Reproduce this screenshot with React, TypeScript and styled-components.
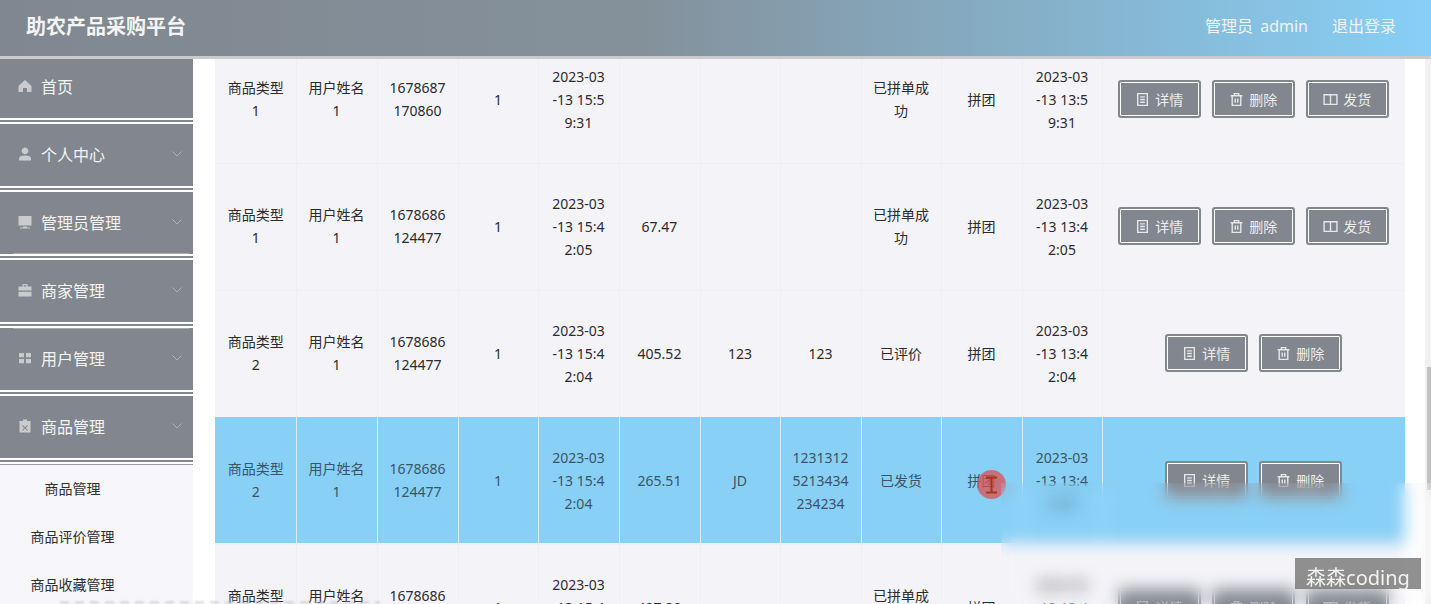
import React from "react";
import styled, { createGlobalStyle } from "styled-components";

const GlobalStyle = createGlobalStyle`
  html, body {
    margin: 0;
    height: 100%;
    overflow: hidden;
    background: #fff;
    font-family: "Noto Sans", "Noto Sans CJK SC", sans-serif;
  }
`;

const Page = styled.div`
  position: relative;
  width: 1431px;
  height: 604px;
  overflow: hidden;
`;

const Header = styled.header`
  position: relative;
  z-index: 2;
  box-sizing: border-box;
  height: 59px;
  border-bottom: 3px solid #c9c9ce;
  display: flex;
  align-items: center;
  justify-content: space-between;
  padding: 0 35px 6px 26px;
  background: linear-gradient(90deg, #808790 0%, #84919b 45%, #87cff6 100%);
  color: #fff;
`;

const Title = styled.h1`
  margin: 0;
  font-size: 20px;
  font-weight: 700;
  color: #f4f4f4;
`;

const HeaderLinks = styled.div`
  display: flex;
  gap: 24px;
  font-size: 16px;
  word-spacing: 3px;
  color: #eef4f8;
`;

const Body = styled.div`
  display: flex;
  height: 545px;
`;

const Sidebar = styled.aside`
  width: 193px;
  flex: none;
  margin-top: -3px;
  background: #f7f6fa;
`;

const MenuItem = styled.div<{ $rule?: "top" | "bottom" }>`
  position: relative;
  box-sizing: border-box;
  height: 62px;
  display: flex;
  align-items: center;
  padding: 0 11px 2px 18px;
  background: #82868e;
  color: #f4f4f4;
  font-size: 16px;
  box-shadow: 0 2px 0 #fff, 0 4px 0 #82868e, 0 6px 0 #fff;
  margin-bottom: 6px;

  &::after {
    content: "";
    display: ${({ $rule }) => ($rule ? "block" : "none")};
    position: absolute;
    left: 13px;
    right: 4px;
    height: 1px;
    background: #a9acb1;
    ${({ $rule }) => ($rule === "top" ? "top: 0;" : "bottom: 0;")}
  }
`;

const MenuIcon = styled.svg`
  width: 14px;
  height: 14px;
  margin-right: 9px;
  flex: none;
  fill: #c9cbce;
`;

const Chevron = styled.svg`
  width: 10px;
  height: 6px;
  margin-left: auto;
  fill: none;
  stroke: #b0b4b8;
  stroke-width: 1;
`;

const SubMenu = styled.div`
  border-top: 1px solid #9a9da3;
`;

const SubItem = styled.div`
  width: 145px;
  height: 48px;
  line-height: 48px;
  text-align: center;
  font-size: 14px;
  color: #2e2e30;
`;

const Main = styled.main`
  flex: 1;
  padding: 0 26px 0 22px;
  overflow: hidden;
`;

const Table = styled.table`
  width: 1190px;
  margin-top: -23px;
  table-layout: fixed;
  border-collapse: collapse;
  font-size: 14px;
  line-height: 23px;
`;

const Row = styled.tr<{ $active?: boolean }>`
  height: 127px;
  background: ${({ $active }) => ($active ? "#88d0f6" : "#f4f4f8")};
  color: ${({ $active }) => ($active ? "#3b5468" : "#2b2b2d")};

  td {
    border-left: 1px solid ${({ $active }) => ($active ? "#d6eefb" : "#efeff2")};
    border-top: 1px solid ${({ $active }) => ($active ? "#88d0f6" : "#efeff2")};
    box-shadow: ${({ $active }) => ($active ? "inset 0 -1px 0 #f4f4f8" : "none")};
  }

  td:first-child {
    border-left: 0;
    padding-left: 11px;
  }

  td:last-child {
    padding-left: 9px;
  }
`;

const Cell = styled.td`
  padding: 0 10px 2px;
  text-align: center;
  word-break: break-all;
  vertical-align: middle;
  white-space: pre-line;
`;

const ActionRow = styled.div`
  display: flex;
  justify-content: center;
  gap: 11px;
`;

const ActionButton = styled.button`
  width: 83px;
  height: 38px;
  box-sizing: border-box;
  display: flex;
  align-items: center;
  justify-content: center;
  gap: 5px;
  padding: 0;
  background: #82868e;
  border: 2px solid #82868e;
  border-radius: 3px;
  box-shadow: inset 0 0 0 1px #fff;
  color: #eceded;
  font-family: inherit;
  font-size: 14px;
`;

const ButtonIcon = styled.svg`
  width: 15px;
  height: 15px;
  fill: none;
  stroke: #e6e7e8;
  stroke-width: 1.3;
`;

const BlurPatch = styled.div`
  position: absolute;
  left: 1001px;
  top: 483px;
  width: 430px;
  height: 121px;
  backdrop-filter: blur(8px);
`;

const SubtitleBlur = styled.div`
  position: absolute;
  left: 60px;
  top: 601px;
  width: 320px;
  height: 3px;
  background: repeating-linear-gradient(90deg, #b9b9be 0 9px, transparent 9px 15px);
  filter: blur(1px);
  opacity: 0.45;
`;

const Watermark = styled.div`
  position: absolute;
  left: 1295px;
  top: 558px;
  width: 126px;
  height: 31px;
  background: rgba(125, 125, 125, 0.85);
  color: #f2f2f2;
  font-size: 20px;
  line-height: 40px;
  text-align: center;
  overflow: hidden;
`;

const CursorDot = styled.div`
  position: absolute;
  left: 977px;
  top: 470px;
  width: 29px;
  height: 29px;
  border-radius: 50%;
  background: rgba(222, 80, 80, 0.75);
  display: flex;
  align-items: center;
  justify-content: center;
`;

const Scrollbar = styled.div`
  position: absolute;
  right: 0;
  top: 59px;
  bottom: 0;
  width: 6px;
  background: #f1f1f1;
`;

const ScrollThumb = styled.div`
  margin: 308px 0 0 2px;
  height: 123px;
  background: #c1c1c1;
`;

type Icon = "home" | "user" | "monitor" | "case" | "grid" | "clip";

const iconPaths: Record<Icon, string> = {
  home: "M7 1 L13.5 7 V13 H9 V9 H5 V13 H.5 V7 Z",
  user: "M7 0.5 a3.4 3.4 0 1 1 -.01 0 Z M1 13.5 V11.5 C1 9.5 3 8.4 7 8.4 S13 9.5 13 11.5 V13.5 Z",
  monitor: "M.5 1 H13.5 V10.5 H.5 Z M5 11.5 H9 V12.5 H12 V13.5 H2 V12.5 H5 Z",
  case: "M4.5 1 H9.5 V3.5 H13.5 V7.5 H.5 V3.5 H4.5 Z M5.7 2.2 V3.5 H8.3 V2.2 Z M.5 8.7 H13.5 V13.5 H.5 Z",
  grid: "M1 2 H6 V6.3 H1 Z M8 2 H13 V6.3 H8 Z M1 8 H6 V12.3 H1 Z M8 8 H13 V12.3 H8 Z",
  clip: "M5 .5 H9 V2 H12.5 V13.5 H1.5 V2 H5 Z M4.8 6 L7 8.2 L9.2 6 L9.9 6.7 L7.7 8.9 L9.9 11.1 L9.2 11.8 L7 9.6 L4.8 11.8 L4.1 11.1 L6.3 8.9 L4.1 6.7 Z",
};

const menu: { label: string; icon: Icon; arrow?: boolean; rule?: "top" | "bottom" }[] = [
  { label: "首页", icon: "home" },
  { label: "个人中心", icon: "user", arrow: true },
  { label: "管理员管理", icon: "monitor", arrow: true, rule: "bottom" },
  { label: "商家管理", icon: "case", arrow: true },
  { label: "用户管理", icon: "grid", arrow: true, rule: "top" },
  { label: "商品管理", icon: "clip", arrow: true },
];

const DetailIcon = () => (
  <ButtonIcon viewBox="0 0 14 14">
    <path d="M2.5 1.5 H11.5 V12.5 H2.5 Z M4.8 4.5 H9.2 M4.8 7 H9.2 M4.8 9.5 H9.2" />
  </ButtonIcon>
);

const DeleteIcon = () => (
  <ButtonIcon viewBox="0 0 14 14">
    <path d="M1.5 3.5 H12.5 M5 3.5 V1.5 H9 V3.5 M3 3.5 V12.5 H11 V3.5 M5.8 6 V10 M8.2 6 V10" />
  </ButtonIcon>
);

const ShipIcon = () => (
  <ButtonIcon viewBox="0 0 14 14">
    <path d="M1 2.5 H13 V11.5 H1 Z M7 2.5 V11.5" />
  </ButtonIcon>
);

interface RowData {
  type: string;
  serial: string;
  paid: string;
  price: string;
  company: string;
  tracking: string;
  status: string;
  created: string;
  ship?: boolean;
  active?: boolean;
}

const rows: RowData[] = [
  { type: "商品类型1", serial: "1678687170860", paid: "2023-03\n-13 15:5\n9:31", price: "", company: "", tracking: "", status: "已拼单成功", created: "2023-03\n-13 13:5\n9:31", ship: true },
  { type: "商品类型1", serial: "1678686124477", paid: "2023-03\n-13 15:4\n2:05", price: "67.47", company: "", tracking: "", status: "已拼单成功", created: "2023-03\n-13 13:4\n2:05", ship: true },
  { type: "商品类型2", serial: "1678686124477", paid: "2023-03\n-13 15:4\n2:04", price: "405.52", company: "123", tracking: "123", status: "已评价", created: "2023-03\n-13 13:4\n2:04" },
  { type: "商品类型2", serial: "1678686124477", paid: "2023-03\n-13 15:4\n2:04", price: "265.51", company: "JD", tracking: "12313125213434234234", status: "已发货", created: "2023-03\n-13 13:4\n2:04", active: true },
  { type: "商品类型1", serial: "1678686124477", paid: "2023-03\n-13 15:4\n2:03", price: "407.20", company: "", tracking: "", status: "已拼单成功", created: "2023-03\n-13 13:4\n2:03", ship: true },
];

const widths = [81, 81, 81, 80, 81, 81, 80, 81, 80, 81, 80, 303];

export default function App() {
  return (
    <Page>
      <GlobalStyle />
      <Header>
        <Title>助农产品采购平台</Title>
        <HeaderLinks>
          <span>管理员 admin</span>
          <span>退出登录</span>
        </HeaderLinks>
      </Header>
      <Body>
        <Sidebar>
          {menu.map((item) => (
            <MenuItem key={item.label} $rule={item.rule}>
              <MenuIcon viewBox="0 0 14 14">
                <path fillRule="evenodd" d={iconPaths[item.icon]} />
              </MenuIcon>
              {item.label}
              {item.arrow && (
                <Chevron viewBox="0 0 10 6">
                  <path d="M.5 .5 L5 5 L9.5 .5" />
                </Chevron>
              )}
            </MenuItem>
          ))}
          <SubMenu>
            <SubItem>商品管理</SubItem>
            <SubItem>商品评价管理</SubItem>
            <SubItem>商品收藏管理</SubItem>
          </SubMenu>
        </Sidebar>
        <Main>
          <Table>
            <colgroup>
              {widths.map((w, i) => (
                <col key={i} style={{ width: w }} />
              ))}
            </colgroup>
            <tbody>
              {rows.map((row, i) => (
                <Row key={i} $active={row.active}>
                  <Cell>{row.type}</Cell>
                  <Cell>用户姓名1</Cell>
                  <Cell>{row.serial}</Cell>
                  <Cell>1</Cell>
                  <Cell>{row.paid}</Cell>
                  <Cell>{row.price}</Cell>
                  <Cell>{row.company}</Cell>
                  <Cell>{row.tracking}</Cell>
                  <Cell>{row.status}</Cell>
                  <Cell>拼团</Cell>
                  <Cell>{row.created}</Cell>
                  <Cell>
                    <ActionRow>
                      <ActionButton><DetailIcon />详情</ActionButton>
                      <ActionButton><DeleteIcon />删除</ActionButton>
                      {row.ship && <ActionButton><ShipIcon />发货</ActionButton>}
                    </ActionRow>
                  </Cell>
                </Row>
              ))}
            </tbody>
          </Table>
        </Main>
      </Body>
      <Scrollbar>
        <ScrollThumb />
      </Scrollbar>
      <CursorDot>
        <svg width="11" height="18" viewBox="0 0 11 18" fill="none" stroke="#a8350f" strokeWidth="2">
          <path d="M0 1.5 H11 M5.5 1.5 V16.5 M0 16.5 H11" />
        </svg>
      </CursorDot>
      <BlurPatch />
      <SubtitleBlur />
      <Watermark>森森coding</Watermark>
    </Page>
  );
}
